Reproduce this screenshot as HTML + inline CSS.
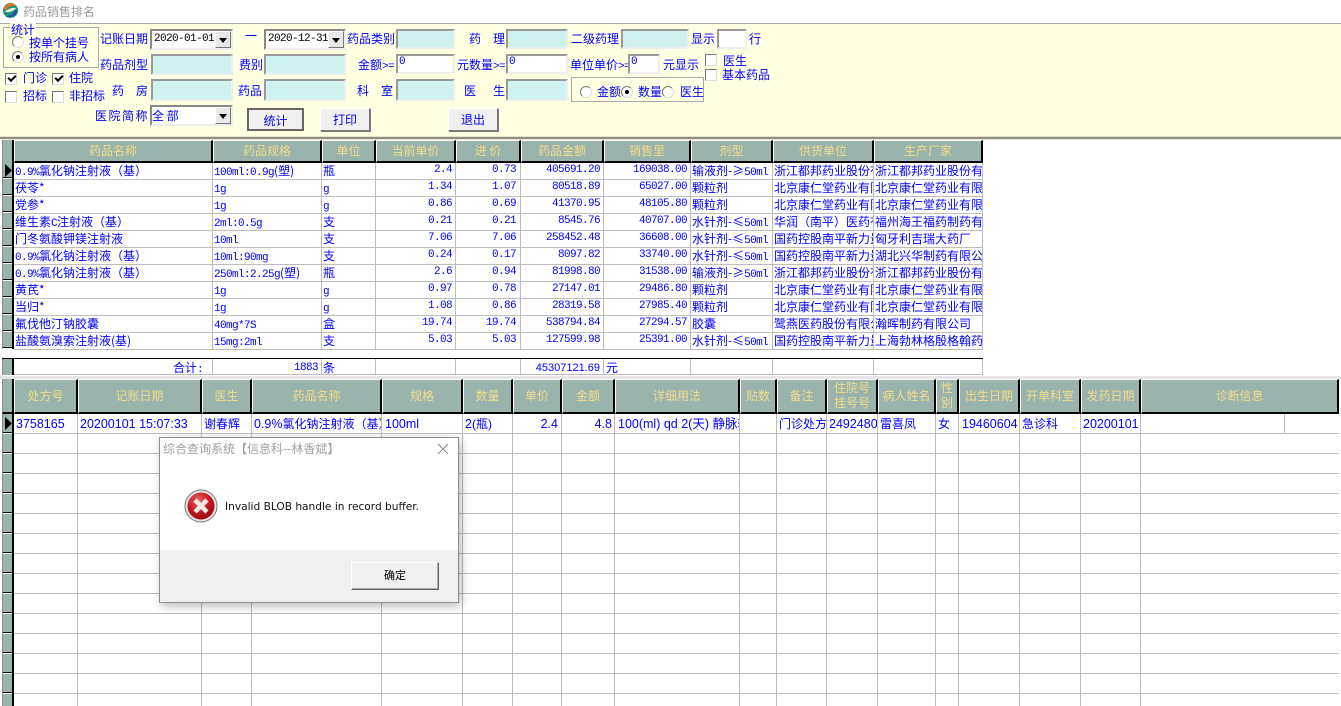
<!DOCTYPE html>
<html lang="zh"><head><meta charset="utf-8"><title>药品销售排名</title>
<style>
html,body{margin:0;padding:0;width:1341px;height:706px;overflow:hidden;background:#fff}
body{position:relative;font:12px/14px "WenQuanYi Zen Hei","Noto Sans CJK SC","Liberation Sans",sans-serif;color:#00f}
div,span{position:absolute;white-space:nowrap;box-sizing:border-box}
i{font:11px "Liberation Mono",monospace;font-style:normal;letter-spacing:-.6px}
.p{height:14px;line-height:14px}
.cy,.wh{background:#cff2f1;border:2px solid;border-color:#9a9a9a #eee #eee #9a9a9a;height:20px}
.wh{background:#fff;color:#00f;font:11px/13px "Liberation Mono",monospace;padding-left:1px}
.cb{width:12px;height:12px;background:#fff;border:1px solid;border-color:#777 #ddd #ddd #777}
.cb.k:after{content:"";position:absolute;left:2px;top:1px;width:6px;height:3px;border:solid #000;border-width:0 0 2px 2px;transform:rotate(-45deg)}
.rd{width:12px;height:12px;border-radius:50%;background:#fff;border:1px solid;border-color:#777 #ddd #ddd #777}
.rd.k:after{content:"";position:absolute;left:3px;top:3px;width:4px;height:4px;border-radius:50%;background:#000}
.cm{height:21px;background:#fff;border:2px solid;border-color:#888 #eee #eee #888;color:#000;font:11px/17px "Liberation Mono",monospace;letter-spacing:-.6px;padding-left:2px}
.cm b{position:absolute;box-sizing:border-box;right:0;top:0;width:16px;height:17px;background:#e8e8e8;border:1px solid;border-color:#fff #777 #777 #fff}
.cm b:after{content:"";position:absolute;left:3px;top:6px;border:4px solid transparent;border-top:5px solid #000;border-bottom:0}
.bt{background:#f0f0f0;border:1px solid;border-color:#fff #777 #777 #fff;box-shadow:1px 1px 0 #777;color:#00f;text-align:center;line-height:22px}
.vl{width:1px;background:#bdbdbd}
.hd{background:#9ab3ad;color:#f3dc8c;text-align:center;border-top:1px solid #fff;border-left:1px solid #fff;border-right:2px solid #000;border-bottom:2px solid #000}
.g1{top:140px;height:23px;line-height:20px}
.g2{top:379px;height:35px;line-height:32px}
.r1{height:17px;left:0;width:983px;line-height:17px}
.r1 span{height:17px;overflow:hidden;top:0;padding-left:1px;line-height:17px}
.a{left:14px;width:198px}.b{left:213px;width:108px}.c{left:322px;width:53px}
.d{left:376px;width:76px}.e{left:456px;width:60px}.f{left:521px;width:79px}.g{left:604px;width:83px}
.h{left:691px;width:81px}.k1{left:773px;width:100px}.j{left:874px;width:108px}
.n{text-align:right;font:11px/17px "Liberation Mono",monospace;letter-spacing:-.6px}
.s2{top:414px;height:19px;overflow:hidden;font:12.5px/20px "Liberation Sans",sans-serif}
.t2{top:414px;height:19px;overflow:hidden;line-height:20px}
</style></head><body>
<!-- title -->
<svg style="position:absolute;left:2px;top:2px" width="17" height="17" viewBox="0 0 17 17"><circle cx="8.5" cy="8.5" r="7.5" fill="#1f8f7c"/><path d="M2 6C4 1 11 0 15 4 11 3 6 4 5 7 4 9 2 8 2 6Z" fill="#e8791c"/><path d="M15 9C15 14 8 17 3 14 8 14 11 13 12 10 13 8 15 7 15 9Z" fill="#1d4fa0"/><path d="M3 10C5 7 11 5 14 6 12 9 7 11 3 10Z" fill="#e9efe0"/></svg>
<div class="p" style="left:23px;top:5px;color:#9c9c9c">药品销售排名</div>
<!-- panel -->
<div style="left:0;top:23px;width:1341px;height:113px;background:#ffffe1;border-top:1px solid #a8a8a8"></div>
<div style="left:0;top:136px;width:1341px;height:4px;background:linear-gradient(#e4e4c8 0 1px,#8e8e84 1px 3px,#e8e8d4 3px)"></div>
<div style="left:3px;top:27px;width:96px;height:41px;border:1px solid #aaa"></div>
<div class="p" style="left:10px;top:23px;background:#ffffe1;padding:0 1px">统计</div>
<div class="rd" style="left:12px;top:36px"></div><div class="p" style="left:29px;top:36px">按单个挂号</div>
<div class="rd k" style="left:12px;top:51px"></div><div class="p" style="left:29px;top:50px">按所有病人</div>
<div class="cb k" style="left:5px;top:73px"></div><div class="p" style="left:23px;top:71px">门诊</div>
<div class="cb k" style="left:52px;top:73px"></div><div class="p" style="left:69px;top:71px">住院</div>
<div class="cb" style="left:5px;top:91px"></div><div class="p" style="left:23px;top:89px">招标</div>
<div class="cb" style="left:52px;top:91px"></div><div class="p" style="left:69px;top:89px">非招标</div>
<div class="p" style="left:100px;top:32px">记账日期</div>
<div class="cm" style="left:150px;top:29px;width:83px">2020-01-01<b></b></div>
<div class="p" style="left:245px;top:29px">一</div>
<div class="cm" style="left:264px;top:29px;width:82px">2020-12-31<b></b></div>
<div class="p" style="left:347px;top:32px">药品类别</div>
<div class="cy" style="left:396px;top:29px;width:59px"></div>
<div class="p" style="left:469px;top:32px">药</div><div class="p" style="left:493px;top:32px">理</div>
<div class="cy" style="left:506px;top:29px;width:62px"></div>
<div class="p" style="left:571px;top:32px">二级药理</div>
<div class="cy" style="left:621px;top:29px;width:68px"></div>
<div class="p" style="left:691px;top:32px">显示</div>
<div class="wh" style="left:717px;top:29px;width:30px"></div>
<div class="p" style="left:749px;top:32px">行</div>
<div class="p" style="left:100px;top:58px">药品剂型</div>
<div class="cy" style="left:151px;top:54px;width:82px;height:21px"></div>
<div class="p" style="left:239px;top:58px">费别</div>
<div class="cy" style="left:264px;top:54px;width:82px;height:21px"></div>
<div class="p" style="left:358px;top:58px">金额<i>&gt;=</i></div>
<div class="wh" style="left:396px;top:54px;width:59px">0</div>
<div class="p" style="left:457px;top:58px">元数量<i>&gt;=</i></div>
<div class="wh" style="left:506px;top:54px;width:62px">0</div>
<div class="p" style="left:570px;top:58px">单位单价<i>&gt;=</i></div>
<div class="wh" style="left:628px;top:54px;width:32px">0</div>
<div class="p" style="left:663px;top:58px">元显示</div>
<div class="cb" style="left:705px;top:54px"></div><div class="p" style="left:723px;top:54px">医生</div>
<div class="cb" style="left:705px;top:69px"></div><div class="p" style="left:722px;top:68px">基本药品</div>
<div class="p" style="left:112px;top:84px">药</div><div class="p" style="left:136px;top:84px">房</div>
<div class="cy" style="left:151px;top:79px;width:82px;height:22px"></div>
<div class="p" style="left:238px;top:84px">药品</div>
<div class="cy" style="left:264px;top:79px;width:82px;height:22px"></div>
<div class="p" style="left:357px;top:84px">科</div><div class="p" style="left:381px;top:84px">室</div>
<div class="cy" style="left:396px;top:79px;width:59px;height:22px"></div>
<div class="p" style="left:464px;top:84px">医</div><div class="p" style="left:493px;top:84px">生</div>
<div class="cy" style="left:506px;top:79px;width:62px;height:22px"></div>
<div style="left:571px;top:77px;width:133px;height:25px;border:1px solid #aaa"></div>
<div class="rd" style="left:580px;top:86px"></div><div class="p" style="left:597px;top:85px">金额</div>
<div class="rd k" style="left:621px;top:86px"></div><div class="p" style="left:638px;top:85px">数量</div>
<div class="rd" style="left:662px;top:86px"></div><div class="p" style="left:680px;top:85px">医生</div>
<div class="p" style="left:95px;top:109px;letter-spacing:1.5px">医院简称</div>
<div class="cm" style="left:150px;top:105px;width:83px;font:12px/17px 'WenQuanYi Zen Hei','Noto Sans CJK SC',sans-serif;color:#00f;letter-spacing:0;padding-left:0">全 部<b></b></div>
<div class="bt" style="left:247px;top:108px;width:57px;height:23px;border:2px solid;border-color:#666;box-shadow:none;line-height:21px">统计</div>
<div class="bt" style="left:320px;top:108px;width:50px;height:23px">打印</div>
<div class="bt" style="left:448px;top:108px;width:50px;height:23px">退出</div>
<!-- grid 1 -->
<div style="left:2px;top:140px;width:12px;height:209px;background:#9ab3ad;border-right:2px solid #000;border-left:1px solid #888"></div>
<div style="left:2px;top:162px;width:12px;height:187px;background:repeating-linear-gradient(#9ab3ad 0 15px,#000 15px 16px,#fff 16px 17px);border-right:2px solid #000;border-left:1px solid #888"></div>
<svg style="position:absolute;left:5px;top:164px" width="7" height="13"><path d="M0 0L7 6.5 0 13Z" fill="#000"/></svg>
<div style="left:14px;top:179px;width:969px;height:171px;background:repeating-linear-gradient(#bdbdbd 0 1px,transparent 1px 17px)"></div>
<div style="left:14px;top:162px;width:969px;height:188px;background:
linear-gradient(#bdbdbd,#bdbdbd) 198px 0/1px 100% no-repeat,linear-gradient(#bdbdbd,#bdbdbd) 307px 0/1px 100% no-repeat,linear-gradient(#bdbdbd,#bdbdbd) 361px 0/1px 100% no-repeat,linear-gradient(#bdbdbd,#bdbdbd) 441px 0/1px 100% no-repeat,linear-gradient(#bdbdbd,#bdbdbd) 506px 0/1px 100% no-repeat,linear-gradient(#bdbdbd,#bdbdbd) 589px 0/1px 100% no-repeat,linear-gradient(#bdbdbd,#bdbdbd) 676px 0/1px 100% no-repeat,linear-gradient(#bdbdbd,#bdbdbd) 758px 0/1px 100% no-repeat,linear-gradient(#bdbdbd,#bdbdbd) 859px 0/1px 100% no-repeat,linear-gradient(#bdbdbd,#bdbdbd) 968px 0/1px 100% no-repeat"></div>
<div class="hd g1" style="left:14px;width:199px">药品名称</div>
<div class="hd g1" style="left:213px;width:109px">药品规格</div>
<div class="hd g1" style="left:322px;width:54px">单位</div>
<div class="hd g1" style="left:376px;width:80px">当前单价</div>
<div class="hd g1" style="left:456px;width:65px">进 价</div>
<div class="hd g1" style="left:521px;width:83px">药品金额</div>
<div class="hd g1" style="left:604px;width:87px">销售里</div>
<div class="hd g1" style="left:691px;width:82px">剂型</div>
<div class="hd g1" style="left:773px;width:101px">供货单位</div>
<div class="hd g1" style="left:874px;width:109px">生产厂家</div>

<div class="r1" style="top:162px"><span class="a"><i>0.9%</i>氯化钠注射液（基）</span><span class="b"><i>100ml:0.9g</i>(塑)</span><span class="c">瓶</span><span class="d n">2.4</span><span class="e n">0.73</span><span class="f n">405691.20</span><span class="g n">169038.00</span><span class="h">输液剂-≥<i>50ml</i></span><span class="k1">浙江都邦药业股份有限</span><span class="j">浙江都邦药业股份有限</span></div>
<div class="r1" style="top:179px"><span class="a">茯苓*</span><span class="b"><i>1g</i></span><span class="c"><i>g</i></span><span class="d n">1.34</span><span class="e n">1.07</span><span class="f n">80518.89</span><span class="g n">65027.00</span><span class="h">颗粒剂</span><span class="k1">北京康仁堂药业有限</span><span class="j">北京康仁堂药业有限公</span></div>
<div class="r1" style="top:196px"><span class="a">党参*</span><span class="b"><i>1g</i></span><span class="c"><i>g</i></span><span class="d n">0.86</span><span class="e n">0.69</span><span class="f n">41370.95</span><span class="g n">48105.80</span><span class="h">颗粒剂</span><span class="k1">北京康仁堂药业有限</span><span class="j">北京康仁堂药业有限公</span></div>
<div class="r1" style="top:213px"><span class="a">维生素<i>C</i>注射液（基）</span><span class="b"><i>2ml:0.5g</i></span><span class="c">支</span><span class="d n">0.21</span><span class="e n">0.21</span><span class="f n">8545.76</span><span class="g n">40707.00</span><span class="h">水针剂-≤<i>50ml</i></span><span class="k1">华润（南平）医药有限</span><span class="j">福州海王福药制药有限</span></div>
<div class="r1" style="top:230px"><span class="a">门冬氨酸钾镁注射液</span><span class="b"><i>10ml</i></span><span class="c">支</span><span class="d n">7.06</span><span class="e n">7.06</span><span class="f n">258452.48</span><span class="g n">36608.00</span><span class="h">水针剂-≤<i>50ml</i></span><span class="k1">国药控股南平新力量</span><span class="j">匈牙利吉瑞大药厂</span></div>
<div class="r1" style="top:247px"><span class="a"><i>0.9%</i>氯化钠注射液（基）</span><span class="b"><i>10ml:90mg</i></span><span class="c">支</span><span class="d n">0.24</span><span class="e n">0.17</span><span class="f n">8097.82</span><span class="g n">33740.00</span><span class="h">水针剂-≤<i>50ml</i></span><span class="k1">国药控股南平新力量</span><span class="j">湖北兴华制药有限公司</span></div>
<div class="r1" style="top:264px"><span class="a"><i>0.9%</i>氯化钠注射液（基）</span><span class="b"><i>250ml:2.25g</i>(塑)</span><span class="c">瓶</span><span class="d n">2.6</span><span class="e n">0.94</span><span class="f n">81998.80</span><span class="g n">31538.00</span><span class="h">输液剂-≥<i>50ml</i></span><span class="k1">浙江都邦药业股份有限</span><span class="j">浙江都邦药业股份有限</span></div>
<div class="r1" style="top:281px"><span class="a">黄芪*</span><span class="b"><i>1g</i></span><span class="c"><i>g</i></span><span class="d n">0.97</span><span class="e n">0.78</span><span class="f n">27147.01</span><span class="g n">29486.80</span><span class="h">颗粒剂</span><span class="k1">北京康仁堂药业有限</span><span class="j">北京康仁堂药业有限公</span></div>
<div class="r1" style="top:298px"><span class="a">当归*</span><span class="b"><i>1g</i></span><span class="c"><i>g</i></span><span class="d n">1.08</span><span class="e n">0.86</span><span class="f n">28319.58</span><span class="g n">27985.40</span><span class="h">颗粒剂</span><span class="k1">北京康仁堂药业有限</span><span class="j">北京康仁堂药业有限公</span></div>
<div class="r1" style="top:315px"><span class="a">氟伐他汀钠胶囊</span><span class="b"><i>40mg*7S</i></span><span class="c">盒</span><span class="d n">19.74</span><span class="e n">19.74</span><span class="f n">538794.84</span><span class="g n">27294.57</span><span class="h">胶囊</span><span class="k1">鹭燕医药股份有限公司</span><span class="j">瀚晖制药有限公司</span></div>
<div class="r1" style="top:332px"><span class="a">盐酸氨溴索注射液(基)</span><span class="b"><i>15mg:2ml</i></span><span class="c">支</span><span class="d n">5.03</span><span class="e n">5.03</span><span class="f n">127599.98</span><span class="g n">25391.00</span><span class="h">水针剂-≤<i>50ml</i></span><span class="k1">国药控股南平新力量</span><span class="j">上海勃林格殷格翰药业</span></div>
<!-- summary -->
<div style="left:2px;top:358px;width:981px;height:17px;border-top:1px solid #000;border-bottom:1px solid #bdbdbd;background:
linear-gradient(#bdbdbd,#bdbdbd) 210px 0/1px 100% no-repeat,linear-gradient(#bdbdbd,#bdbdbd) 319px 0/1px 100% no-repeat,linear-gradient(#bdbdbd,#bdbdbd) 373px 0/1px 100% no-repeat,linear-gradient(#bdbdbd,#bdbdbd) 453px 0/1px 100% no-repeat,linear-gradient(#bdbdbd,#bdbdbd) 518px 0/1px 100% no-repeat,linear-gradient(#bdbdbd,#bdbdbd) 601px 0/1px 100% no-repeat,linear-gradient(#bdbdbd,#bdbdbd) 688px 0/1px 100% no-repeat,linear-gradient(#bdbdbd,#bdbdbd) 770px 0/1px 100% no-repeat,linear-gradient(#bdbdbd,#bdbdbd) 871px 0/1px 100% no-repeat,linear-gradient(#bdbdbd,#bdbdbd) 980px 0/1px 100% no-repeat"></div>
<div style="left:2px;top:359px;width:12px;height:16px;background:#9ab3ad;border-right:2px solid #000;border-left:1px solid #888"></div>
<div class="p" style="left:173px;top:361px">合计<i>:</i></div>
<div class="p" style="left:260px;top:361px;width:58px;text-align:right;font:11px/14px 'Liberation Mono',monospace;letter-spacing:-.6px">1883</div>
<div class="p" style="left:323px;top:361px">条</div>
<div class="p" style="left:530px;top:361px;width:70px;text-align:right;font:11px/14px 'Liberation Sans',sans-serif">45307121.69</div>
<div class="p" style="left:606px;top:361px">元</div>
<!-- grid 2 -->
<div style="left:0;top:376px;width:1341px;height:3px;background:#e6e6e6"></div>
<div style="left:14px;top:433px;width:1325px;height:273px;background:repeating-linear-gradient(#bdbdbd 0 1px,transparent 1px 20px)"></div>
<div class="vl" style="left:77px;top:414px;height:292px"></div>
<div class="vl" style="left:201px;top:414px;height:292px"></div>
<div class="vl" style="left:251px;top:414px;height:292px"></div>
<div class="vl" style="left:381px;top:414px;height:292px"></div>
<div class="vl" style="left:462px;top:414px;height:292px"></div>
<div class="vl" style="left:512px;top:414px;height:292px"></div>
<div class="vl" style="left:561px;top:414px;height:292px"></div>
<div class="vl" style="left:614px;top:414px;height:292px"></div>
<div class="vl" style="left:739px;top:414px;height:292px"></div>
<div class="vl" style="left:776px;top:414px;height:292px"></div>
<div class="vl" style="left:826px;top:414px;height:292px"></div>
<div class="vl" style="left:877px;top:414px;height:292px"></div>
<div class="vl" style="left:935px;top:414px;height:292px"></div>
<div class="vl" style="left:958px;top:414px;height:292px"></div>
<div class="vl" style="left:1019px;top:414px;height:292px"></div>
<div class="vl" style="left:1080px;top:414px;height:292px"></div>
<div class="vl" style="left:1140px;top:414px;height:292px"></div>
<div class="vl" style="left:1284px;top:414px;height:19px"></div>
<div style="left:2px;top:379px;width:12px;height:35px;background:#9ab3ad;border-right:2px solid #000;border-left:1px solid #888;border-bottom:2px solid #000"></div>
<div style="left:2px;top:414px;width:12px;height:292px;background:repeating-linear-gradient(#9ab3ad 0 18px,#000 18px 19px,#fff 19px 20px);border-right:2px solid #000;border-left:1px solid #888"></div>
<svg style="position:absolute;left:5px;top:417px" width="7" height="13"><path d="M0 0L7 6.5 0 13Z" fill="#000"/></svg>
<div class="hd g2" style="left:14px;width:64px">处方号</div>
<div class="hd g2" style="left:78px;width:124px">记账日期</div>
<div class="hd g2" style="left:202px;width:50px">医生</div>
<div class="hd g2" style="left:252px;width:130px">药品名称</div>
<div class="hd g2" style="left:382px;width:81px">规格</div>
<div class="hd g2" style="left:463px;width:50px">数量</div>
<div class="hd g2" style="left:513px;width:49px">单价</div>
<div class="hd g2" style="left:562px;width:53px">金额</div>
<div class="hd g2" style="left:615px;width:125px">详细用法</div>
<div class="hd g2" style="left:740px;width:37px">贴数</div>
<div class="hd g2" style="left:777px;width:50px">备注</div>
<div class="hd g2" style="left:827px;width:51px;line-height:15px;white-space:normal">住院号<br>挂号号</div>
<div class="hd g2" style="left:878px;width:58px">病人姓名</div>
<div class="hd g2" style="left:936px;width:23px;line-height:15px;white-space:normal">性<br>别</div>
<div class="hd g2" style="left:959px;width:61px">出生日期</div>
<div class="hd g2" style="left:1020px;width:61px">开单科室</div>
<div class="hd g2" style="left:1081px;width:60px">发药日期</div>
<div class="hd g2" style="left:1141px;width:198px">诊断信息</div>
<span class="s2" style="left:16px;width:60px">3758165</span>
<span class="s2" style="left:80px;width:120px">20200101 15:07:33</span>
<span class="t2" style="left:204px;width:46px">谢春辉</span>
<span class="s2" style="left:254px;width:127px">0.9%<span style="position:static;font-size:12px">氯化钠注射液（基）</span></span>
<span class="s2" style="left:385px;width:76px">100ml</span>
<span class="s2" style="left:465px;width:46px">2<span style="position:static;font-size:12px">(瓶)</span></span>
<span class="s2" style="left:513px;width:45px;text-align:right">2.4</span>
<span class="s2" style="left:562px;width:50px;text-align:right">4.8</span>
<span class="s2" style="left:618px;width:121px">100(ml) qd 2(天) 静脉输液</span>
<span class="t2" style="left:779px;width:47px">门诊处方</span>
<span class="s2" style="left:829px;width:48px">2492480</span>
<span class="t2" style="left:880px;width:54px">雷喜凤</span>
<span class="t2" style="left:938px;width:20px">女</span>
<span class="s2" style="left:962px;width:57px">19460604</span>
<span class="t2" style="left:1022px;width:57px">急诊科</span>
<span class="s2" style="left:1083px;width:57px">20200101</span>
<!-- dialog -->
<div style="left:159px;top:437px;width:300px;height:166px;background:#fff;border:1px solid #8f8f8f;box-shadow:2px 3px 9px rgba(0,0,0,.28)"></div>
<div style="left:160px;top:550px;width:298px;height:52px;background:#f0f0f0"></div>
<div class="p" style="left:163px;top:442px;color:#a0a0a0">综合查询系统【信息科--林香斌】</div>
<svg style="position:absolute;left:437px;top:443px" width="12" height="12"><path d="M1 1L11 11M11 1L1 11" stroke="#8a8a8a" stroke-width="1"/></svg>
<svg style="position:absolute;left:184px;top:489px" width="34" height="34" viewBox="0 0 34 34"><defs><radialGradient id="a" cx=".4" cy=".3" r=".8"><stop offset="0" stop-color="#e8636a"/><stop offset=".55" stop-color="#c4141d"/><stop offset="1" stop-color="#8b0a10"/></radialGradient></defs><circle cx="17" cy="17" r="16" fill="#e5e5e5" stroke="#777"/><circle cx="17" cy="17" r="13.5" fill="url(#a)"/><path d="M11 11L23 23M23 11L11 23" stroke="#e8e8e8" stroke-width="4.5"/></svg>
<div class="p" style="left:225px;top:500px;color:#111;font:10.6px/14px 'DejaVu Sans',sans-serif">Invalid BLOB handle in record buffer.</div>
<div style="left:351px;top:562px;width:88px;height:28px;background:#f0f0f0;border:1px solid;border-color:#fff #666 #666 #fff;box-shadow:inset -1px -1px 0 #aaa;color:#000;text-align:center;line-height:24px;font-size:11px">确定</div>
</body></html>
